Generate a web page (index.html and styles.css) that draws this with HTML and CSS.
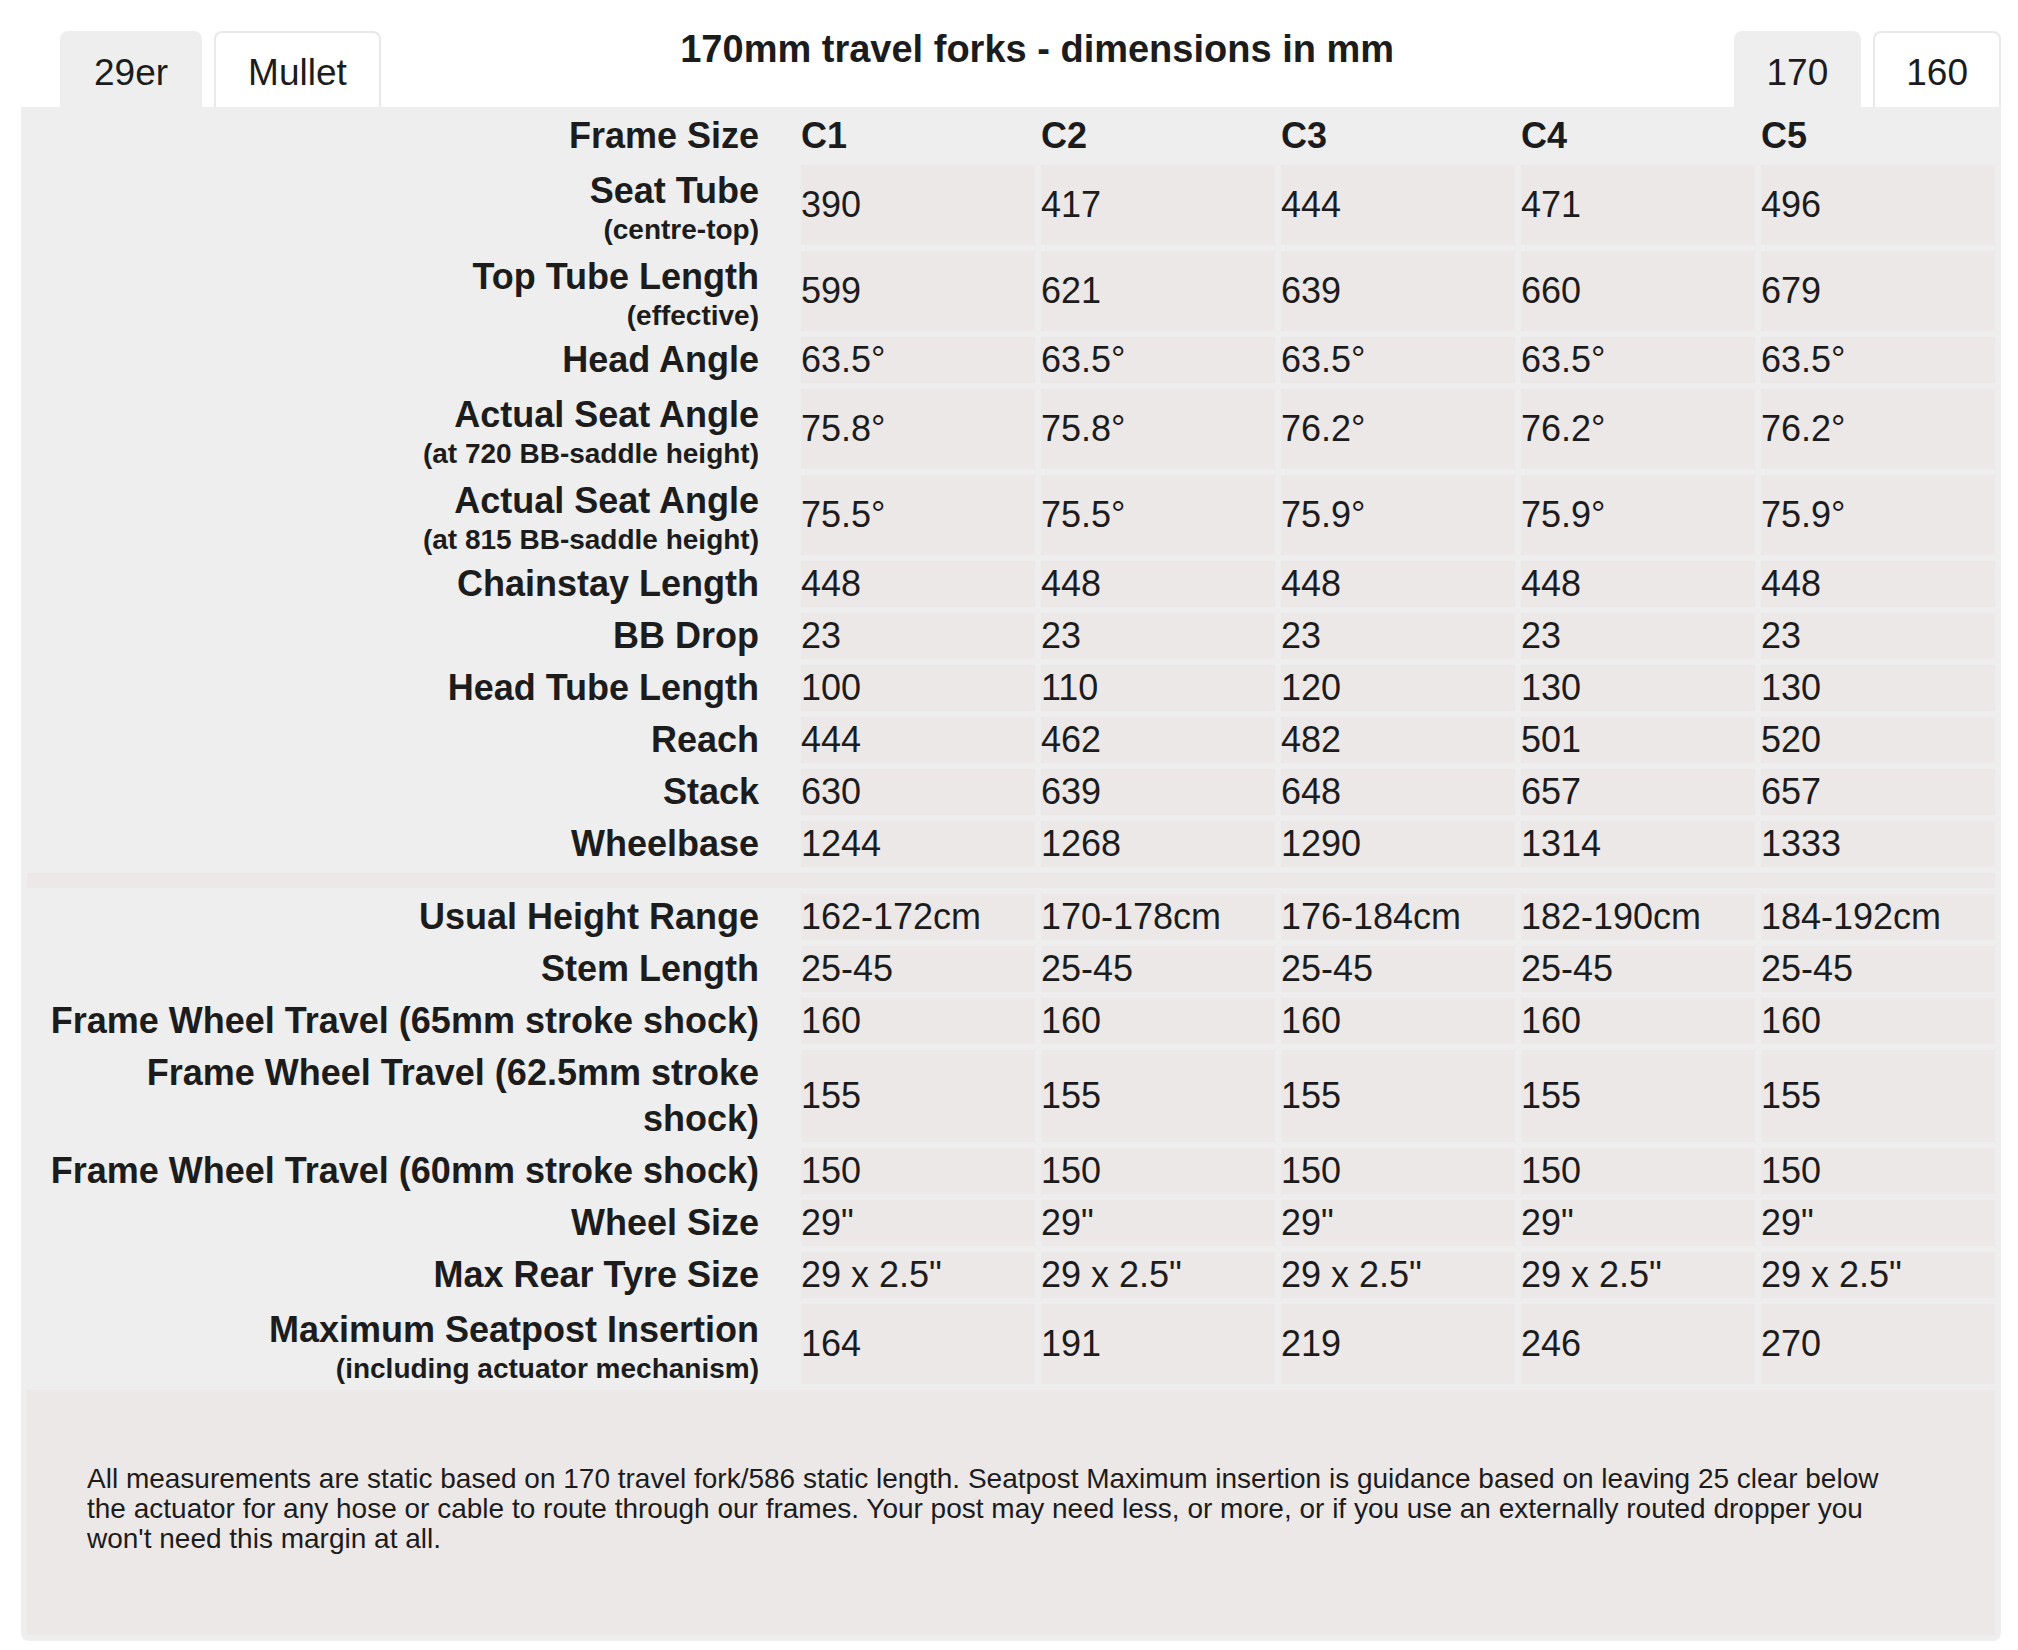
FILE: index.html
```html
<!DOCTYPE html>
<html lang="en">
<head>
<meta charset="utf-8">
<title>170mm travel forks - dimensions in mm</title>
<link rel="stylesheet" href="styles.css">
</head>
<body>
<div class="wrap">
  <div class="head">
    <div class="tabs tabs-left">
      <div class="tab active">29er</div>
      <div class="tab">Mullet</div>
    </div>
    <h1 class="title">170mm travel forks - dimensions in mm</h1>
    <div class="tabs tabs-right">
      <div class="tab active">170</div>
      <div class="tab">160</div>
    </div>
  </div>
  <div class="panel">
    <table class="geo">
      <colgroup>
        <col class="c-label">
        <col class="c-val"><col class="c-val"><col class="c-val"><col class="c-val"><col class="c-val">
      </colgroup>
      <tbody>
        <tr class="hdr">
          <th class="lbl">Frame Size</th>
          <th>C1</th><th>C2</th><th>C3</th><th>C4</th><th>C5</th>
        </tr>
        <tr>
          <th class="lbl lbl2">Seat Tube<span class="sub">(centre-top)</span></th>
          <td>390</td><td>417</td><td>444</td><td>471</td><td>496</td>
        </tr>
        <tr>
          <th class="lbl lbl2">Top Tube Length<span class="sub">(effective)</span></th>
          <td>599</td><td>621</td><td>639</td><td>660</td><td>679</td>
        </tr>
        <tr>
          <th class="lbl">Head Angle</th>
          <td>63.5°</td><td>63.5°</td><td>63.5°</td><td>63.5°</td><td>63.5°</td>
        </tr>
        <tr>
          <th class="lbl lbl2">Actual Seat Angle<span class="sub">(at 720 BB-saddle height)</span></th>
          <td>75.8°</td><td>75.8°</td><td>76.2°</td><td>76.2°</td><td>76.2°</td>
        </tr>
        <tr>
          <th class="lbl lbl2">Actual Seat Angle<span class="sub">(at 815 BB-saddle height)</span></th>
          <td>75.5°</td><td>75.5°</td><td>75.9°</td><td>75.9°</td><td>75.9°</td>
        </tr>
        <tr>
          <th class="lbl">Chainstay Length</th>
          <td>448</td><td>448</td><td>448</td><td>448</td><td>448</td>
        </tr>
        <tr>
          <th class="lbl">BB Drop</th>
          <td>23</td><td>23</td><td>23</td><td>23</td><td>23</td>
        </tr>
        <tr>
          <th class="lbl">Head Tube Length</th>
          <td>100</td><td>110</td><td>120</td><td>130</td><td>130</td>
        </tr>
        <tr>
          <th class="lbl">Reach</th>
          <td>444</td><td>462</td><td>482</td><td>501</td><td>520</td>
        </tr>
        <tr>
          <th class="lbl">Stack</th>
          <td>630</td><td>639</td><td>648</td><td>657</td><td>657</td>
        </tr>
        <tr>
          <th class="lbl">Wheelbase</th>
          <td>1244</td><td>1268</td><td>1290</td><td>1314</td><td>1333</td>
        </tr>
        <tr class="divider">
          <td colspan="6"></td>
        </tr>
        <tr>
          <th class="lbl">Usual Height Range</th>
          <td>162-172cm</td><td>170-178cm</td><td>176-184cm</td><td>182-190cm</td><td>184-192cm</td>
        </tr>
        <tr>
          <th class="lbl">Stem Length</th>
          <td>25-45</td><td>25-45</td><td>25-45</td><td>25-45</td><td>25-45</td>
        </tr>
        <tr>
          <th class="lbl">Frame Wheel Travel (65mm stroke shock)</th>
          <td>160</td><td>160</td><td>160</td><td>160</td><td>160</td>
        </tr>
        <tr>
          <th class="lbl">Frame Wheel Travel (62.5mm stroke shock)</th>
          <td>155</td><td>155</td><td>155</td><td>155</td><td>155</td>
        </tr>
        <tr>
          <th class="lbl">Frame Wheel Travel (60mm stroke shock)</th>
          <td>150</td><td>150</td><td>150</td><td>150</td><td>150</td>
        </tr>
        <tr>
          <th class="lbl">Wheel Size</th>
          <td>29"</td><td>29"</td><td>29"</td><td>29"</td><td>29"</td>
        </tr>
        <tr>
          <th class="lbl">Max Rear Tyre Size</th>
          <td>29 x 2.5"</td><td>29 x 2.5"</td><td>29 x 2.5"</td><td>29 x 2.5"</td><td>29 x 2.5"</td>
        </tr>
        <tr>
          <th class="lbl lbl2">Maximum Seatpost Insertion<span class="sub">(including actuator mechanism)</span></th>
          <td>164</td><td>191</td><td>219</td><td>246</td><td>270</td>
        </tr>
        <tr class="note">
          <td colspan="6">All measurements are static based on 170 travel fork/586 static length. Seatpost Maximum insertion is guidance based on leaving 25 clear below the actuator for any hose or cable to route through our frames. Your post may need less, or more, or if you use an externally routed dropper you won't need this margin at all.</td>
        </tr>
      </tbody>
    </table>
  </div>
</div>
</body>
</html>
```

FILE: styles.css
```css
html, body {
  margin: 0;
  padding: 0;
  background: #ffffff;
}

body {
  font-family: "Liberation Sans", Arial, Helvetica, sans-serif;
  color: #1c1c1c;
}

.wrap {
  width: 1980px;
  margin-left: 21px;
}

.head {
  display: flex;
  align-items: flex-end;
  height: 107px;
}

.tabs {
  display: flex;
  gap: 12px;
}

.tabs-left {
  margin-left: 39px;
}

.tab {
  box-sizing: border-box;
  height: 76px;
  padding: 6px 32px 0;
  line-height: 68px;
  font-size: 37px;
  border: 2px solid #e9e9e9;
  border-bottom: 0;
  border-radius: 8px 8px 0 0;
  background: #ffffff;
  text-align: center;
}

.tabs-right .tab {
  padding: 6px 31px 0;
}

.tab.active {
  background: #eeeeee;
  border-color: #eeeeee;
}

.title {
  flex: 1;
  align-self: flex-start;
  margin: 0;
  padding: 27px 40px 0 0;
  font-size: 38px;
  line-height: 44px;
  font-weight: bold;
  text-align: center;
}

.panel {
  background: #eeeeee;
  border-radius: 0 0 8px 8px;
}

.geo {
  width: 100%;
  table-layout: fixed;
  border-collapse: separate;
  border-spacing: 6px;
  font-size: 36px;
  line-height: 46px;
}

.c-label {
  width: 768px;
}

.c-val {
  width: 234px;
}

.geo th,
.geo td {
  padding: 0;
  vertical-align: middle;
  text-align: left;
}

.geo td {
  background: #ede8e8;
  font-weight: normal;
}

.geo th {
  font-weight: bold;
}

.geo th.lbl {
  text-align: right;
  padding: 0 36px 0 2px;
}

.geo th.lbl2 {
  padding-top: 3px;
}

.sub {
  display: block;
  font-size: 28px;
  line-height: 31px;
}

.divider td {
  height: 15px;
  padding: 0;
}

.note td {
  padding: 74px 85px 81px 60px;
  font-size: 28px;
  line-height: 30px;
  background: #ede8e8;
}
```
